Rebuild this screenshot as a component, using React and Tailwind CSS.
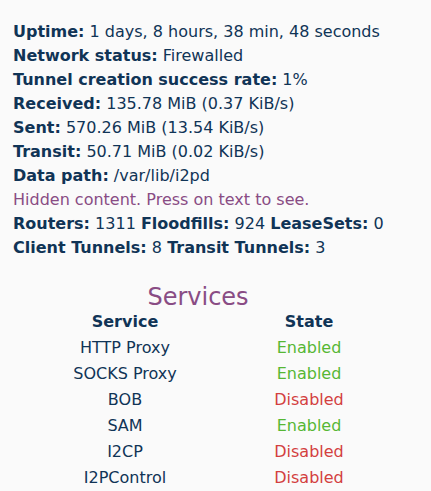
export default function App() {
  const services = [
    ["HTTP Proxy", true],
    ["SOCKS Proxy", true],
    ["BOB", false],
    ["SAM", true],
    ["I2CP", false],
    ["I2PControl", false],
  ];
  return (
    <div className="min-h-[491px] bg-[#fafafa] text-[#103456] text-[16px] leading-[24px] font-['DejaVu_Sans',sans-serif] pl-[13px] pt-[20px]">
      <div className="whitespace-nowrap">
        <div><b>Uptime:</b> 1 days, 8 hours, 38 min, 48 seconds</div>
        <div><b>Network status:</b> Firewalled</div>
        <div><b>Tunnel creation success rate:</b> 1%</div>
        <div><b>Received:</b> 135.78 MiB (0.37 KiB/s)</div>
        <div><b>Sent:</b> 570.26 MiB (13.54 KiB/s)</div>
        <div><b>Transit:</b> 50.71 MiB (0.02 KiB/s)</div>
        <div><b>Data path:</b> /var/lib/i2pd</div>
        <div className="text-[#894c84]">Hidden content. Press on text to see.</div>
        <div><b>Routers:</b> 1311 <b>Floodfills:</b> 924 <b>LeaseSets:</b> 0</div>
        <div><b>Client Tunnels:</b> 8 <b>Transit Tunnels:</b> 3</div>
      </div>
      <div className="w-[370px]">
        <h3 className="mt-[25px] text-center text-[24px] leading-[24px] text-[#894c84]">Services</h3>
        <div className="grid grid-cols-[224px_144px] gap-y-[2px] pt-[1px] text-center">
          <div className="font-bold">Service</div>
          <div className="font-bold">State</div>
          {services.map(([name, on]) => (
            <div key={name} className="contents">
              <div>{name}</div>
              <div className={on ? "text-[#56b734]" : "text-[#d33f3f]"}>
                {on ? "Enabled" : "Disabled"}
              </div>
            </div>
          ))}
        </div>
      </div>
    </div>
  );
}
